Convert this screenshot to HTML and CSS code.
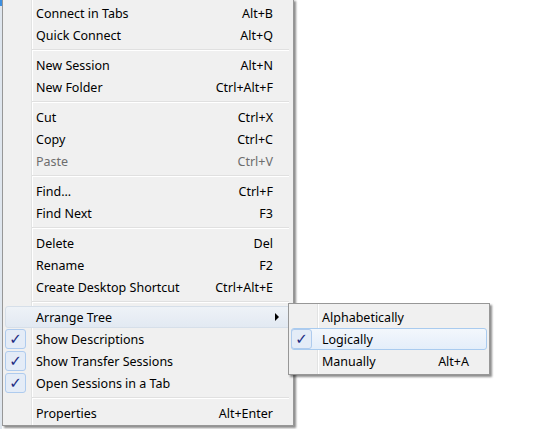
FILE: index.html
```html
<!DOCTYPE html>
<html>
<head>
<meta charset="utf-8">
<link rel="stylesheet" href="styles.css">
</head>
<body>
<div class="desk">
  <div class="edge"></div>
  <div class="menu main">
    <div class="item"><span class="icon"></span><span class="label">Connect in Tabs</span><span class="key">Alt+B</span></div>
    <div class="item"><span class="icon"></span><span class="label">Quick Connect</span><span class="key">Alt+Q</span></div>
    <div class="sep"></div>
    <div class="item"><span class="icon"></span><span class="label">New Session</span><span class="key">Alt+N</span></div>
    <div class="item"><span class="icon"></span><span class="label">New Folder</span><span class="key">Ctrl+Alt+F</span></div>
    <div class="sep"></div>
    <div class="item"><span class="icon"></span><span class="label">Cut</span><span class="key">Ctrl+X</span></div>
    <div class="item"><span class="icon"></span><span class="label">Copy</span><span class="key">Ctrl+C</span></div>
    <div class="item disabled"><span class="icon"></span><span class="label">Paste</span><span class="key">Ctrl+V</span></div>
    <div class="sep"></div>
    <div class="item"><span class="icon"></span><span class="label">Find...</span><span class="key">Ctrl+F</span></div>
    <div class="item"><span class="icon"></span><span class="label">Find Next</span><span class="key">F3</span></div>
    <div class="sep"></div>
    <div class="item"><span class="icon"></span><span class="label">Delete</span><span class="key">Del</span></div>
    <div class="item"><span class="icon"></span><span class="label">Rename</span><span class="key">F2</span></div>
    <div class="item"><span class="icon"></span><span class="label">Create Desktop Shortcut</span><span class="key">Ctrl+Alt+E</span></div>
    <div class="sep"></div>
    <div class="item open"><span class="icon"></span><span class="label">Arrange Tree</span><span class="arrow"></span></div>
    <div class="item"><span class="icon checked">✓</span><span class="label">Show Descriptions</span><span class="key"></span></div>
    <div class="item"><span class="icon checked">✓</span><span class="label">Show Transfer Sessions</span><span class="key"></span></div>
    <div class="item"><span class="icon checked">✓</span><span class="label">Open Sessions in a Tab</span><span class="key"></span></div>
    <div class="sep"></div>
    <div class="item"><span class="icon"></span><span class="label">Properties</span><span class="key">Alt+Enter</span></div>
  </div>
  <div class="menu sub">
    <div class="item"><span class="icon"></span><span class="label">Alphabetically</span><span class="key"></span></div>
    <div class="item hot"><span class="icon checked">✓</span><span class="label">Logically</span><span class="key"></span></div>
    <div class="item"><span class="icon"></span><span class="label">Manually</span><span class="key">Alt+A</span></div>
  </div>
</div>
</body>
</html>
```
FILE: styles.css
```css
html, body {
  margin: 0;
  padding: 0;
  background: #ffffff;
}
.desk {
  position: relative;
  width: 533px;
  height: 429px;
  overflow: hidden;
  font-family: "Noto Sans", "Liberation Sans", sans-serif;
  font-size: 12.5px;
  color: #000;
}
.edge {
  position: absolute;
  left: 0;
  top: 0;
  width: 2px;
  height: 429px;
  background: linear-gradient(to bottom, #3d8fe0 0, #3d8fe0 6px, #dfe6ee 6px, #dfe6ee 100%);
}
.menu {
  position: absolute;
  box-sizing: border-box;
  border: 1px solid #979797;
  padding: 2px;
  background:
    linear-gradient(to right, transparent 28px, #e2e3e3 28px, #e2e3e3 29px, #ffffff 29px, #ffffff 30px, transparent 30px),
    #f0f0f0;
  box-shadow: 2px 2px 2px rgba(0, 0, 0, 0.45);
}
.main {
  left: 2px;
  top: -1px;
  width: 292px;
  padding-bottom: 1px;
}
.sub {
  left: 288px;
  top: 303px;
  width: 202px;
}
.item {
  display: flex;
  align-items: center;
  height: 22px;
  box-sizing: border-box;
  padding-right: 17px;
  border: 1px solid transparent;
  border-radius: 3px;
  white-space: nowrap;
}
.icon {
  width: 21px;
  height: 20px;
  box-sizing: border-box;
  margin-left: -1px;
  margin-right: 10px;
  display: flex;
  align-items: center;
  justify-content: center;
  border-radius: 3px;
}
.icon.checked {
  background: #e4ecf7;
  border: 1px solid #aecbee;
  color: #1b2a82;
  font-family: "DejaVu Sans", sans-serif;
  font-size: 15px;
  line-height: 1;
}
.label {
  flex: 1;
}
.key {
  text-align: right;
}
.disabled {
  color: #6d6d6d;
}
.sep {
  height: 8px;
  margin-left: 27px;
  margin-right: 2px;
  background: linear-gradient(to bottom, transparent 3px, #e0e0e0 3px, #e0e0e0 4px, #ffffff 4px, #ffffff 5px, transparent 5px);
}
.open {
  background: linear-gradient(to bottom, #eef2f7, #e2e9f2);
  border-color: #d6dfe9;
}
.hot {
  background: linear-gradient(to bottom, #f3f7fc, #e4eefa);
  border-color: #a9cbef;
}
.arrow {
  width: 0;
  height: 0;
  border-top: 4px solid transparent;
  border-bottom: 4px solid transparent;
  border-left: 4px solid #000;
  margin-right: -6px;
}
```
